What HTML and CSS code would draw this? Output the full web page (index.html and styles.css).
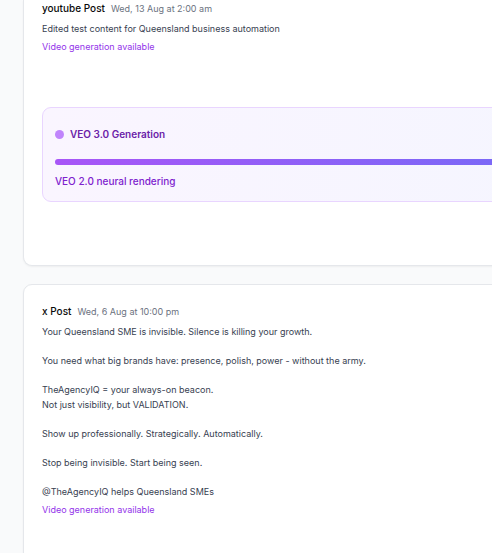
FILE: index.html
```html
<!DOCTYPE html>
<html lang="en">
<head>
<meta charset="utf-8">
<meta name="viewport" content="width=device-width, initial-scale=1">
<title>Posts</title>
<link rel="stylesheet" href="styles.css">
</head>
<body>
<main class="posts">
  <article class="card card-first">
    <header class="post-head">
      <h2>youtube Post</h2>
      <time>Wed, 13 Aug at 2:00 am</time>
    </header>
    <div class="copy">
      <p>Edited test content for Queensland business automation</p>
    </div>
    <p class="video-note">Video generation available</p>
    <section class="generation">
      <h3><span class="dot"></span>VEO 3.0 Generation</h3>
      <div class="bar"></div>
      <p>VEO 2.0 neural rendering</p>
    </section>
  </article>
  <article class="card">
    <header class="post-head">
      <h2>x Post</h2>
      <time>Wed, 6 Aug at 10:00 pm</time>
    </header>
    <div class="copy">
      <p>Your Queensland SME is invisible. Silence is killing your growth.</p>
      <p>You need what big brands have: presence, polish, power - without the army.</p>
      <p>TheAgencyIQ = your always-on beacon.<br>Not just visibility, but VALIDATION.</p>
      <p>Show up professionally. Strategically. Automatically.</p>
      <p>Stop being invisible. Start being seen.</p>
      <p>@TheAgencyIQ helps Queensland SMEs</p>
    </div>
    <p class="video-note">Video generation available</p>
  </article>
</main>
</body>
</html>
```

FILE: styles.css
```css
* {
  box-sizing: border-box;
}

html {
  overflow: hidden;
}

body {
  margin: 0;
  background: #f9fafb;
  color: #374151;
  font-family: Inter, "Liberation Sans", sans-serif;
  font-size: 9px;
  line-height: 15px;
}

h2,
h3,
p {
  margin: 0;
}

/* Cards run past the right edge of the window. */
.posts {
  display: flex;
  flex-direction: column;
  gap: 18px;
  margin-left: 23px;
  margin-right: -40px;
}

.card {
  padding: 18px 18px 63px;
  background: #fff;
  border: 1px solid #e5e7eb;
  border-radius: 9px;
  box-shadow: 0 1px 2px rgba(0, 0, 0, 0.05);
}

.card-first {
  padding-top: 0;
  border-top: 0;
  border-top-left-radius: 0;
}

.post-head {
  display: flex;
  align-items: center;
  gap: 6px;
  height: 17px;
  margin-bottom: 4px;
}

.post-head h2 {
  color: #0a0a0a;
  font-size: 10px;
  font-weight: 500;
}

.post-head time {
  color: #6b7280;
}

.copy {
  display: flex;
  flex-direction: column;
  gap: 14px;
}

.video-note {
  margin-top: 3px;
  color: #9333ea;
}

.generation {
  margin-top: 53px;
  padding: 19px 12px 12px;
  color: #6b21a8;
  font-size: 10px;
  background: linear-gradient(to right, #faf5ff, #eff6ff) 0 0 / 240% 100%;
  border: 1px solid #e9d5ff;
  border-radius: 9px;
}

.generation h3 {
  display: flex;
  align-items: center;
  gap: 6px;
  font-size: 10px;
  font-weight: 600;
}

.dot {
  width: 9px;
  height: 9px;
  background: #c084fc;
  border-radius: 50%;
}

.bar {
  height: 6px;
  margin: 17px 0 9px;
  background: linear-gradient(to right, #a855f7, #3b82f6) 0 0 / 240% 100%;
  border-radius: 3px;
}

.generation p {
  color: #7e22ce;
  font-weight: 500;
}
```
